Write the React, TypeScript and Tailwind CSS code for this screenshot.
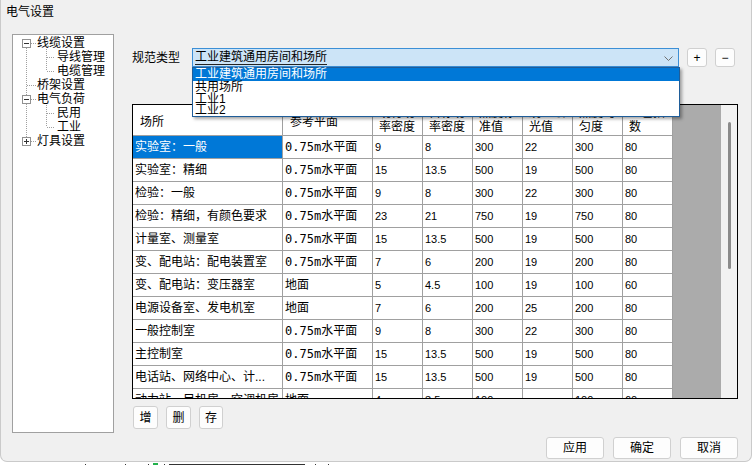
import React from "react";

const cols = [150, 90, 50, 50, 50, 50, 50, 50];

const headers = ["场所", "参考平面", "现行功率密度", "目标功率密度", "照度标准值", "统一眩光值", "照度均匀度", "显色指数"];

const rows: string[][] = [
  ["实验室：一般", "0.75m水平面", "9", "8", "300", "22", "300", "80"],
  ["实验室：精细", "0.75m水平面", "15", "13.5", "500", "19", "500", "80"],
  ["检验：一般", "0.75m水平面", "9", "8", "300", "22", "300", "80"],
  ["检验：精细，有颜色要求", "0.75m水平面", "23", "21", "750", "19", "750", "80"],
  ["计量室、测量室", "0.75m水平面", "15", "13.5", "500", "19", "500", "80"],
  ["变、配电站：配电装置室", "0.75m水平面", "7", "6", "200", "19", "200", "80"],
  ["变、配电站：变压器室", "地面", "5", "4.5", "100", "19", "100", "60"],
  ["电源设备室、发电机室", "地面", "7", "6", "200", "25", "200", "80"],
  ["一般控制室", "0.75m水平面", "9", "8", "300", "22", "300", "80"],
  ["主控制室", "0.75m水平面", "15", "13.5", "500", "19", "500", "80"],
  ["电话站、网络中心、计...", "0.75m水平面", "15", "13.5", "500", "19", "500", "80"],
  ["动力站、目机房、空调机房", "地面", "4", "3.5", "100", "-", "100", "60"],
];

const tree = [
  { text: "线缆设置", child: false },
  { text: "导线管理", child: true },
  { text: "电缆管理", child: true },
  { text: "桥架设置", child: false },
  { text: "电气负荷", child: false },
  { text: "民用", child: true },
  { text: "工业", child: true },
  { text: "灯具设置", child: false },
];

function TreeLines() {
  const dot = { stroke: "#a0a0a0", strokeDasharray: "1 1", shapeRendering: "crispEdges" as const };
  const box = (cy: number, plus: boolean) => (
    <g key={cy}>
      <rect x={9.5} y={cy - 4.5} width={8} height={8} fill="#fff" stroke="#919191" shapeRendering="crispEdges" />
      <line x1={11} x2={16} y1={cy - 0.5} y2={cy - 0.5} stroke="#333" shapeRendering="crispEdges" />
      {plus && <line x1={13.5} x2={13.5} y1={cy - 3} y2={cy + 2} stroke="#333" shapeRendering="crispEdges" />}
    </g>
  );
  return (
    <svg className="absolute inset-0 pointer-events-none" width="100" height="397">
      <line x1={13.5} x2={13.5} y1={13} y2={60} {...dot} />
      <line x1={13.5} x2={13.5} y1={69} y2={102} {...dot} />
      <line x1={18} x2={23} y1={8.5} y2={8.5} {...dot} />
      <line x1={14} x2={23} y1={50.5} y2={50.5} {...dot} />
      <line x1={18} x2={23} y1={64.5} y2={64.5} {...dot} />
      <line x1={18} x2={23} y1={106.5} y2={106.5} {...dot} />
      <line x1={33.5} x2={33.5} y1={14} y2={36} {...dot} />
      <line x1={34} x2={42} y1={22.5} y2={22.5} {...dot} />
      <line x1={34} x2={42} y1={36.5} y2={36.5} {...dot} />
      <line x1={33.5} x2={33.5} y1={70} y2={92} {...dot} />
      <line x1={34} x2={42} y1={78.5} y2={78.5} {...dot} />
      <line x1={34} x2={42} y1={92.5} y2={92.5} {...dot} />
      {box(8.5, false)}
      {box(64.5, false)}
      {box(106.5, true)}
    </svg>
  );
}

function Cell({ value, col, selected }: { value: string; col: number; selected: boolean }) {
  let content: React.ReactNode = value;
  if (col === 1 && value.startsWith("0.75m")) {
    content = (
      <>
        <span className="font-['DejaVu_Sans_Mono',monospace] text-[12px]">0.75m</span>水平面
      </>
    );
  }
  return (
    <div
      style={{ width: cols[col] }}
      className={`h-full shrink-0 border-r border-[#a0a0a0] flex items-center pl-[2px] overflow-hidden whitespace-nowrap ${
        col >= 2 ? "text-[11px]" : "text-[12px]"
      } ${selected ? "bg-[#0078d7] text-white" : "text-black"}`}
    >
      {content}
    </div>
  );
}

function SmallButton({ label, w }: { label: string; w: string }) {
  return (
    <button
      type="button"
      className={`${w} h-full bg-[#fdfdfd] border border-[#d0d0d0] rounded-[3px] text-[12px] text-black flex items-center justify-center`}
    >
      {label}
    </button>
  );
}

export default function App() {
  return (
    <div className="w-[756px] h-[465px] bg-white overflow-hidden font-['Liberation_Sans','Noto_Sans_CJK_SC',sans-serif] text-black">
      <div className="w-[752px] bg-[#f0f0f0] border-x border-b border-[#cacaca] rounded-b-[7px] flex flex-col">
        <div className="h-[24px] flex items-center pl-[5px] text-[12px]">电气设置</div>

        <div className="flex mt-[10px] ml-[11px]">
          {/* tree */}
          <div className="w-[102px] h-[399px] border border-[#a0a0a0] bg-white relative shrink-0">
            <TreeLines />
            <div className="pt-[1px] flex flex-col">
              {tree.map((t) => (
                <div
                  key={t.text}
                  className={`h-[14px] leading-[14px] text-[12px] ${t.child ? "pl-[44px]" : "pl-[24px]"}`}
                >
                  {t.text}
                </div>
              ))}
            </div>
          </div>

          {/* right panel */}
          <div className="ml-[18px] w-[606px] flex flex-col">
            <div className="mt-[14px] h-[19px] flex items-center">
              <span className="w-[48px] text-[12px]">规范类型</span>
              <div className="relative ml-[12px] w-[487px] h-[19px] bg-[#cce4f7] border border-[#3c8fd6] flex items-center pl-[2px]">
                <span className="text-[12px] leading-[13px] border-b border-[#222]">工业建筑通用房间和场所</span>
                <svg className="absolute right-[5px] top-[7px]" width="9" height="5" viewBox="0 0 9 5">
                  <path d="M0.5 0.5 L4.5 4.5 L8.5 0.5" fill="none" stroke="#707070" strokeWidth="1" />
                </svg>
                {/* open dropdown list */}
                <div className="absolute left-[-1px] top-[18px] w-[488px] h-[50px] bg-white border border-[#1f5d99] shadow-[2px_2px_3px_rgba(0,0,0,0.35)] z-10 flex flex-col text-[12px]">
                  <div className="h-[13px] leading-[13px] bg-[#0078d7] text-white pl-[2px]">工业建筑通用房间和场所</div>
                  <div className="h-[13px] leading-[13px] pl-[2px]">共用场所</div>
                  <div className="h-[11px] leading-[11px] pl-[2px]">工业1</div>
                  <div className="h-[11px] leading-[11px] pl-[2px]">工业2</div>
                </div>
              </div>
              <div className="ml-[8px] w-[20px] h-[19px]">
                <SmallButton label="+" w="w-[20px]" />
              </div>
              <div className="ml-[8px] w-[20px] h-[19px]">
                <SmallButton label="−" w="w-[20px]" />
              </div>
            </div>

            {/* table */}
            <div className="mt-[37px] h-[295px] border border-black flex overflow-hidden">
              <div className="w-[540px] flex flex-col bg-white overflow-hidden">
                <div className="h-[31px] shrink-0 flex border-b border-[#a0a0a0]">
                  {headers.map((h, i) => (
                    <div
                      key={h}
                      style={{ width: cols[i] }}
                      className={`h-full shrink-0 border-r border-[#a0a0a0] flex items-center text-[12px] leading-[14px] overflow-hidden ${
                        i < 2 ? "pl-[7px] pt-[3px]" : "pl-[6px] pr-[5px]"
                      }`}
                    >
                      <span className="break-all">{h}</span>
                    </div>
                  ))}
                </div>
                {rows.map((r, ri) => (
                  <div key={ri} className="h-[23px] shrink-0 flex border-b border-[#a0a0a0]">
                    {r.map((v, ci) => (
                      <Cell key={ci} value={v} col={ci} selected={ri === 0 && ci === 0} />
                    ))}
                  </div>
                ))}
              </div>
              <div className="w-[48px] bg-[#ababab]" />
              <div className="w-[16px] bg-[#f2f2f2] flex flex-col items-center pt-[17px]">
                <div className="w-[3px] h-[147px] ml-[1px] bg-[#8b8b8b] rounded-full" />
              </div>
            </div>

            <div className="mt-[7px] h-[23px] flex gap-[8px] ml-[1px]">
              <SmallButton label="增" w="w-[25px]" />
              <SmallButton label="删" w="w-[25px]" />
              <SmallButton label="存" w="w-[24px]" />
            </div>
          </div>
        </div>

        <div className="mt-[4px] mb-[2px] h-[22px] flex justify-end gap-[9px] pr-[13px]">
          <SmallButton label="应用" w="w-[58px]" />
          <SmallButton label="确定" w="w-[58px]" />
          <SmallButton label="取消" w="w-[58px]" />
        </div>
      </div>

      {/* strip below the dialog */}
      <div className="h-[4px] flex items-end mt-[1px]">
        <div className="w-[85px]" />
        <div className="w-[1px] h-[3px] bg-[#333]" />
        <div className="w-[39px]" />
        <div className="w-[1px] h-[3px] bg-[#333]" />
        <div className="w-[22px]" />
        <div className="w-[1px] h-[3px] bg-[#333]" />
        <div className="w-[4px]" />
        <div className="w-[5px] h-[4px] bg-[#22b14c]" />
        <div className="w-[6px]" />
        <div className="w-[1px] h-[3px] bg-[#333]" />
        <div className="w-[4px]" />
        <div className="w-[136px] h-[3px] bg-[#a22ca2] border-t border-x border-[#333]" />
        <div className="w-[10px]" />
        <div className="w-[1px] h-[3px] bg-[#333]" />
        <div className="w-[12px]" />
        <div className="w-[1px] h-[3px] bg-[#333]" />
      </div>
    </div>
  );
}
